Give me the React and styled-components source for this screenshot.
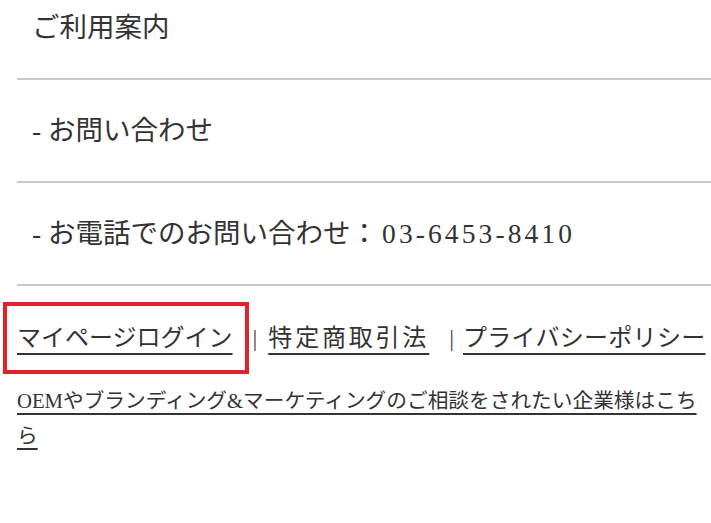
import React from "react";
import styled, { createGlobalStyle } from "styled-components";

const GlobalStyle = createGlobalStyle`
  body {
    margin: 0;
    background: #fff;
    color: #333;
    font-family: "Liberation Serif", "Noto Sans CJK JP", serif;
  }
`;

const Page = styled.div`
  width: 711px;
  overflow: hidden;
`;

const NavList = styled.ul`
  list-style: none;
  margin: 0 0 0 17px;
  padding: 0;
`;

const NavItem = styled.li`
  padding: 31px 0 31px 15px;
  font-size: 27.5px;
  line-height: 39px;
  border-bottom: 2px solid #c9c9c9;
  white-space: nowrap;

  &:first-child {
    padding-top: 8px;
  }
`;

const Phone = styled.span`
  padding-left: 4px;
  letter-spacing: 3.1px;
`;

const Footer = styled.div`
  padding: 16px 0 0 17px;
`;

const LinkRow = styled.div`
  display: flex;
  align-items: center;
  font-size: 24px;
  line-height: 34px;
  white-space: nowrap;
`;

const Highlight = styled.div`
  margin-left: -14px;
  padding: 15px 12px 15px 10px;
  border: 4px solid #e1222b;
`;

const Link = styled.a`
  color: #333;
  text-decoration: underline;
  text-decoration-thickness: 2px;
  text-underline-offset: 7px;
  letter-spacing: ${(p) => p.$spacing || 0}px;
`;

const Pipe = styled.span`
  color: #444;
  margin: 0 ${(p) => p.$right}px 0 ${(p) => p.$left}px;
`;

const Consult = styled.p`
  margin: 10px 0 0;
  width: 694px;
  font-size: 20.7px;
  line-height: 35px;

  a {
    text-underline-offset: 5px;
  }
`;

export default function App() {
  return (
    <Page>
      <GlobalStyle />
      <NavList>
        <NavItem>ご利用案内</NavItem>
        <NavItem>- お問い合わせ</NavItem>
        <NavItem>
          - お電話でのお問い合わせ：<Phone>03-6453-8410</Phone>
        </NavItem>
      </NavList>
      <Footer>
        <LinkRow>
          <Highlight>
            <Link href="#">マイページログイン</Link>
          </Highlight>
          <Pipe $left={4} $right={11}>|</Pipe>
          <Link href="#" $spacing={2.8}>特定商取引法</Link>
          <Pipe $left={20} $right={9}>|</Pipe>
          <Link href="#" $spacing={0.3}>プライバシーポリシー</Link>
        </LinkRow>
        <Consult>
          <Link href="#">
            OEMやブランディング&amp;マーケティングのご相談をされたい企業様はこちら
          </Link>
        </Consult>
      </Footer>
    </Page>
  );
}
